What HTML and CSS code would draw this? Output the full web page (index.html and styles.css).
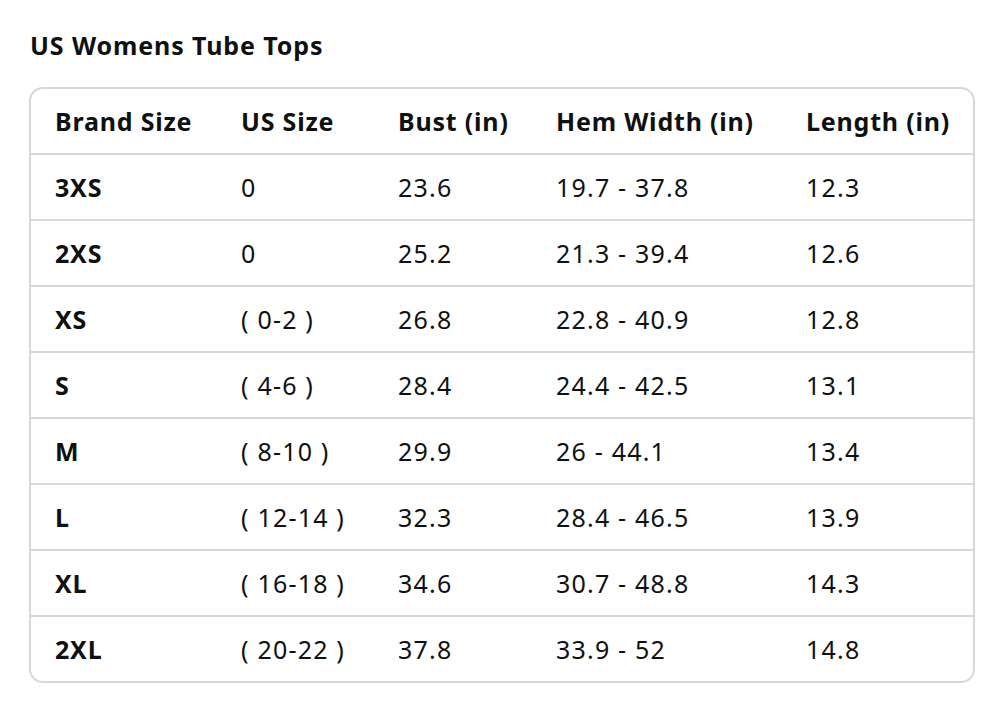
FILE: index.html
```html
<!DOCTYPE html>
<html lang="en">
<head>
<meta charset="utf-8">
<title>US Womens Tube Tops</title>
<link rel="stylesheet" href="styles.css">
</head>
<body>
<div class="page">
  <h2 class="title">US Womens Tube Tops</h2>
  <div class="table-wrap">
    <table class="size-table">
      <colgroup>
        <col class="c1"><col class="c2"><col class="c3"><col class="c4"><col class="c5">
      </colgroup>
      <thead>
        <tr><th>Brand Size</th><th>US Size</th><th>Bust (in)</th><th>Hem Width (in)</th><th>Length (in)</th></tr>
      </thead>
      <tbody>
        <tr><th>3XS</th><td>0</td><td>23.6</td><td>19.7 - 37.8</td><td>12.3</td></tr>
        <tr><th>2XS</th><td>0</td><td>25.2</td><td>21.3 - 39.4</td><td>12.6</td></tr>
        <tr><th>XS</th><td>( 0-2 )</td><td>26.8</td><td>22.8 - 40.9</td><td>12.8</td></tr>
        <tr><th>S</th><td>( 4-6 )</td><td>28.4</td><td>24.4 - 42.5</td><td>13.1</td></tr>
        <tr><th>M</th><td>( 8-10 )</td><td>29.9</td><td>26 - 44.1</td><td>13.4</td></tr>
        <tr><th>L</th><td>( 12-14 )</td><td>32.3</td><td>28.4 - 46.5</td><td>13.9</td></tr>
        <tr><th>XL</th><td>( 16-18 )</td><td>34.6</td><td>30.7 - 48.8</td><td>14.3</td></tr>
        <tr><th>2XL</th><td>( 20-22 )</td><td>37.8</td><td>33.9 - 52</td><td>14.8</td></tr>
      </tbody>
    </table>
  </div>
</div>
</body>
</html>
```
FILE: styles.css
```css
html, body {
  margin: 0;
  padding: 0;
  background: #ffffff;
}
body {
  font-family: "Noto Sans", "Open Sans", "Liberation Sans", sans-serif;
  color: #0f1111;
}
.page {
  padding: 29px 31px 24px 29px;
}
.title {
  margin: 0 0 26px 1px;
  font-size: 25px;
  font-weight: 700;
  line-height: 32px;
  letter-spacing: 0.9px;
}
.table-wrap {
  border: 2px solid #d5d9d9;
  border-radius: 14px;
  overflow: hidden;
}
.size-table {
  width: 100%;
  border-collapse: collapse;
  table-layout: fixed;
}
.c1 { width: 186px; }
.c2 { width: 157px; }
.c3 { width: 158px; }
.c4 { width: 250px; }
.size-table th,
.size-table td {
  height: 64px;
  padding: 0 0 0 24px;
  text-align: left;
  font-size: 25px;
  line-height: 32px;
  vertical-align: middle;
  white-space: nowrap;
}
.size-table th {
  font-weight: 700;
  letter-spacing: 0.8px;
}
.size-table td {
  font-weight: 400;
  letter-spacing: 1.2px;
}
.size-table tr + tr th,
.size-table tr + tr td,
.size-table tbody tr:first-child th,
.size-table tbody tr:first-child td {
  border-top: 2px solid #d5d9d9;
}
```
